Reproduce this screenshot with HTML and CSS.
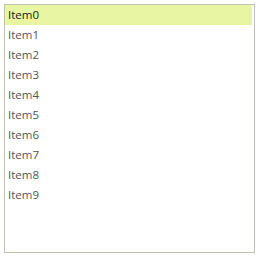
FILE: index.html
```html
<!DOCTYPE html>
<html lang="en">
<head>
  <meta charset="UTF-8">
  <title>List</title>
  <link rel="stylesheet" href="styles.css">
</head>
<body>
  <ul class="listbox">
    <li class="item selected">Item0</li>
    <li class="item">Item1</li>
    <li class="item">Item2</li>
    <li class="item">Item3</li>
    <li class="item">Item4</li>
    <li class="item">Item5</li>
    <li class="item">Item6</li>
    <li class="item">Item7</li>
    <li class="item">Item8</li>
    <li class="item">Item9</li>
  </ul>
</body>
</html>
```

FILE: styles.css
```css
body {
  margin: 0;
  padding: 4px;
  background: #fff;
  font-family: "Open Sans", "DejaVu Sans", sans-serif;
  font-size: 11.5px;
}
.listbox {
  list-style: none;
  margin: 0;
  padding: 0 2px 0 0;
  width: 247px;
  height: 247px;
  border: 1px solid #c2c2b4;
  overflow: hidden;
}
.item {
  height: 20px;
  line-height: 20px;
  padding-left: 3px;
  color: #555;
}
.item.selected {
  background: #e8f5a2;
  color: #1a1a1a;
}
```
